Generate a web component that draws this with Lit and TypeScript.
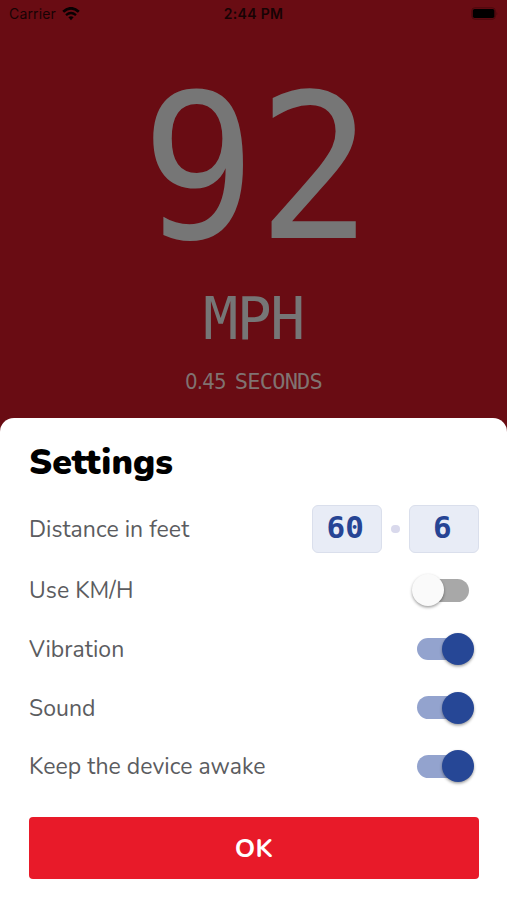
import { LitElement, html, css, svg } from "lit";
import { customElement, property, state } from "lit/decorators.js";
import { classMap } from "lit/directives/class-map.js";

@customElement("toggle-switch")
class ToggleSwitch extends LitElement {
  @property({ type: Boolean }) on = false;

  static styles = css`
    :host { display: block; width: 58px; height: 32px; }
    .switch {
      width: 58px; height: 32px; padding: 0; border: 0; background: none;
      display: grid; grid-template-columns: 1fr; align-items: center;
    }
    .track, .thumb { grid-area: 1 / 1; }
    .track { width: 52px; height: 22.5px; border-radius: 12px; background: #a8a8a8; margin-left: 5px; }
    .thumb {
      width: 32px; height: 32px; border-radius: 50%; background: #fafafa;
      box-shadow: 0 1.5px 3px rgba(0, 0, 0, 0.38);
    }
    .on .track { background: #93a3ce; margin-left: 1px; }
    .on .thumb { background: #264796; justify-self: end; }
  `;

  render() {
    return html`<button class=${classMap({ switch: true, on: this.on })} role="switch"
      aria-checked=${String(this.on)} @click=${() => (this.on = !this.on)}>
      <span class="track"></span><span class="thumb"></span>
    </button>`;
  }
}

@customElement("status-bar")
class StatusBar extends LitElement {
  static styles = css`
    :host {
      display: grid; grid-template-columns: 1fr auto 1fr; align-items: center;
      height: 27px; padding: 0 9px; box-sizing: border-box;
      font: 14px Inter, sans-serif; color: #170304;
    }
    .carrier { display: flex; align-items: center; gap: 6px; letter-spacing: 0.15px; }
    .time { font-weight: 600; font-size: 14px; letter-spacing: 0.3px; }
    .battery { justify-self: end; display: block; }
    svg { display: block; }
  `;

  render() {
    return html`
      <div class="carrier"><span>Carrier</span>
        <svg width="18" height="14" viewBox="0 0 18 14">
          ${svg`<path d="M1.2 4.8 Q9 -2.2 16.8 4.8" fill="none" stroke="#080102" stroke-width="2.7"/>
          <path d="M4 8.1 Q9 3.8 14 8.1" fill="none" stroke="#080102" stroke-width="2.3"/>
          <path d="M6.4 10.2 Q9 8.2 11.6 10.2 L9 13.2 Z" fill="#080102"/>`}
        </svg>
      </div>
      <span class="time">2:44 PM</span>
      <svg class="battery" width="27" height="13" viewBox="0 0 27 13">
        ${svg`<rect x=".8" y=".8" width="23.5" height="11.4" rx="3" fill="none" stroke="#4b090e" stroke-width="1"/>
        <rect x="1.8" y="2" width="21.6" height="9" rx="1.8" fill="#020000"/>
        <path d="M25.5 4.5 Q27 6.5 25.5 8.5 Z" fill="#4b090e"/>`}
      </svg>`;
  }
}

@customElement("app-root")
class AppRoot extends LitElement {
  @state() private options = [
    { label: "Use KM/H", cls: "kmh", on: false },
    { label: "Vibration", cls: "vib", on: true },
    { label: "Sound", cls: "snd", on: true },
    { label: "Keep the device awake", cls: "awake", on: true },
  ];

  static styles = css`
    :host {
      display: flex; flex-direction: column; height: 900px; overflow: hidden;
      background: #690c13; color: #767676;
      font-family: Nunito, "Open Sans", "Noto Sans", sans-serif;
    }
    .readout {
      height: 391px; flex: none; display: flex; flex-direction: column; align-items: center;
      font-family: "DejaVu Sans Mono", monospace; white-space: nowrap;
    }
    .speed {
      margin-top: 65px; margin-left: 8px; height: 153px; line-height: 153px; font-size: 202px; letter-spacing: 2px;
      transform: scaleX(0.94);
    }
    .unit { margin-top: 53px; height: 43px; line-height: 43px; font-size: 58px; letter-spacing: -1.5px; }
    .seconds {
      margin-top: 32px; height: 17px; line-height: 17px; font-size: 22px; letter-spacing: -0.8px;
      color: #807371; display: flex; gap: 9px;
    }
    .number { font-family: "DejaVu Sans Condensed", "DejaVu Sans", sans-serif; font-stretch: condensed; }
    .sheet {
      flex: 1; background: #fff; border-radius: 14px 14px 0 0; padding: 24px 28px 21px 29px;
      display: flex; flex-direction: column; box-sizing: border-box;
    }
    h1 { margin: 0; height: 41px; line-height: 41px; font-size: 35.5px; font-weight: 900; color: #000; letter-spacing: 0.1px; }
    .distance { height: 48px; margin-top: 22px; }
    .row { display: flex; align-items: center; justify-content: space-between; color: #5b5c60; font-size: 23px; letter-spacing: 0.05px; }
    .label { padding-top: 1px; }
    .option { height: 58.7px; padding-right: 5px; }
    .option.kmh { padding-right: 9px; }
    .distance + .option { margin-top: 8px; }
    .fields { display: flex; align-items: center; gap: 9px; }
    .field {
      width: 70.5px; height: 47.5px; flex: none; box-sizing: border-box; border: 1.5px solid #dadfec; border-radius: 6px;
      background: #e8ecf6; color: #264494; display: flex; justify-content: center; align-items: center;
      font: 700 31px/1 "DejaVu Sans Mono", monospace; padding: 0 3px 3px 0;
    }
    .dot { width: 8.5px; height: 8.5px; flex: none; border-radius: 50%; background: #d9d9ec; }
    .ok {
      margin-top: auto; height: 62px; border: 0; border-radius: 4px; background: #e81a29; color: #fff;
      font: 700 26px Nunito, "Open Sans", sans-serif; padding: 0; letter-spacing: 0.3px;
    }
  `;

  render() {
    return html`
      <status-bar></status-bar>
      <section class="readout">
        <div class="speed">92</div>
        <div class="unit">MPH</div>
        <div class="seconds"><span class="number">0.45</span><span>SECONDS</span></div>
      </section>
      <section class="sheet">
        <h1>Settings</h1>
        <div class="row distance">
          <span class="label">Distance in feet</span>
          <div class="fields"><span class="field">60</span><span class="dot"></span><span class="field">6</span></div>
        </div>
        ${this.options.map(
          (o) => html`<div class="row option ${o.cls}">
            <span class="label">${o.label}</span><toggle-switch ?on=${o.on}></toggle-switch>
          </div>`
        )}
        <button class="ok">OK</button>
      </section>`;
  }
}
